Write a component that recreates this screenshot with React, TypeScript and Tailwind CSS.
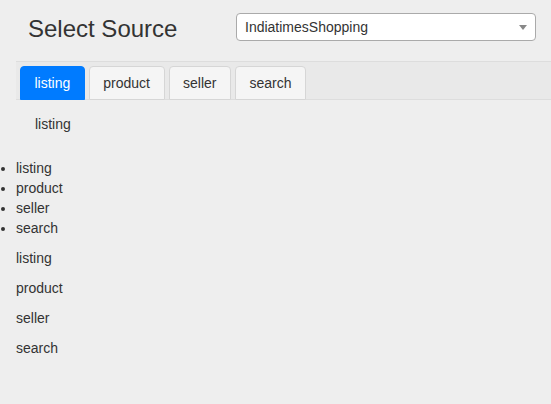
const TABS = ["listing", "product", "seller", "search"];

export default function App() {
	const active = "listing";
	return (
		<div className="min-h-[404px] bg-[#eeeeee] font-['Liberation_Sans',Arial,sans-serif] text-[14px] leading-5 text-[#333]">
			<div className="flex h-[61px] items-start">
				<h2 className="ml-[28px] mt-[16px] w-[208px] text-[24px] leading-[26px]">Select Source</h2>
				<div className="relative mt-[13px] flex h-[28px] w-[300px] items-center rounded-[4px] border border-[#aaa] bg-white pl-[8px]">
					<span>IndiatimesShopping</span>
					<span className="absolute right-[8px] top-[11px] h-0 w-0 border-x-[4px] border-t-[5px] border-x-transparent border-t-[#888]" />
				</div>
			</div>
			<div className="ml-4 flex items-end gap-1 border-y border-[#ddd] bg-[#e9e9e9] pl-[4px] pt-[4px]">
				{TABS.map((t) => (
					<div
						key={t}
						className={
							t === active
								? "-mb-px flex h-[34px] items-center rounded-t-[4px] border border-[#007bff] bg-[#007bff] px-[13.5px] text-white"
								: "-mb-px flex h-[34px] items-center rounded-t-[4px] border border-[#d6d6d6] bg-[#f5f5f5] px-[13.5px]"
						}
					>
						{t}
					</div>
				))}
			</div>
			<div className="ml-[35px] mt-[14px]">listing</div>
			<ul className="mt-[24px] list-disc pl-4">
				{TABS.map((t) => (
					<li key={t}>{t}</li>
				))}
			</ul>
			<div className="pl-4">
				{TABS.map((t) => (
					<p key={t} className="my-[10px]">
						{t}
					</p>
				))}
			</div>
		</div>
	);
}
